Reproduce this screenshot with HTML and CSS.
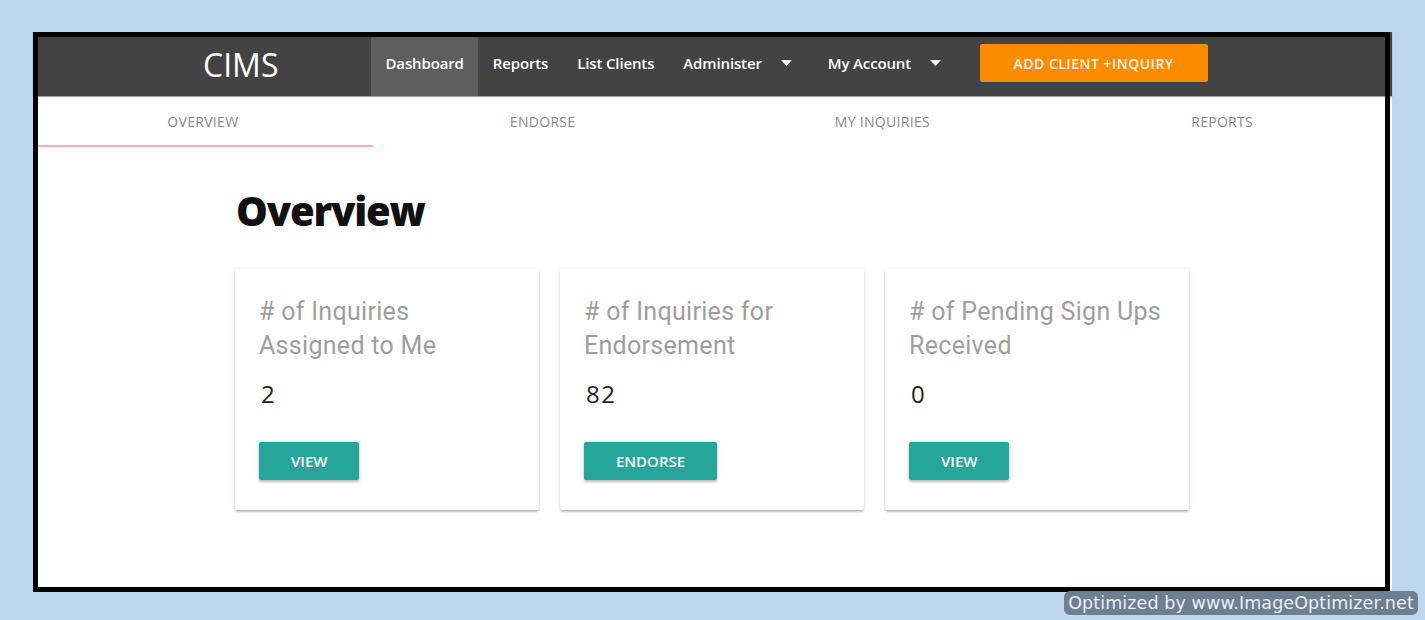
FILE: index.html
```html
<!DOCTYPE html>
<html lang="en">
<head>
<meta charset="utf-8">
<title>CIMS - Overview</title>
<link rel="stylesheet" href="styles.css">
</head>
<body>
<div class="screen">
  <nav class="navbar">
    <div class="brand">CIMS</div>
    <ul class="nav-links">
      <li class="nav-item active">Dashboard</li>
      <li class="nav-item">Reports</li>
      <li class="nav-item">List Clients</li>
      <li class="nav-item dropdown">Administer<svg class="caret" width="11" height="6" viewBox="0 0 11 6"><path d="M0 0h11L5.5 6z" fill="#fff"/></svg></li>
      <li class="nav-item dropdown">My Account<svg class="caret" width="11" height="6" viewBox="0 0 11 6"><path d="M0 0h11L5.5 6z" fill="#fff"/></svg></li>
    </ul>
    <div class="add-btn">ADD CLIENT +INQUIRY</div>
  </nav>
  <div class="tabs">
    <div class="tab active">OVERVIEW</div>
    <div class="tab">ENDORSE</div>
    <div class="tab">MY INQUIRIES</div>
    <div class="tab">REPORTS</div>
  </div>
  <main class="container">
    <h1 class="title">Overview</h1>
    <div class="cards">
      <div class="card">
        <div class="card-title"># of Inquiries<br>Assigned to Me</div>
        <div class="card-num">2</div>
        <div class="btn">VIEW</div>
      </div>
      <div class="card">
        <div class="card-title"># of Inquiries for<br>Endorsement</div>
        <div class="card-num">82</div>
        <div class="btn">ENDORSE</div>
      </div>
      <div class="card">
        <div class="card-title"># of Pending Sign Ups<br>Received</div>
        <div class="card-num">0</div>
        <div class="btn">VIEW</div>
      </div>
    </div>
  </main>
</div>
<div class="watermark">Optimized by www.ImageOptimizer.net</div>
</body>
</html>
```
FILE: styles.css
```css
*, *::before, *::after { box-sizing: border-box; }
html, body { margin: 0; padding: 0; }
body {
  background: #bdd7ee;
  width: 1425px;
  height: 620px;
  padding: 32px 0 0 33px;
  overflow: hidden;
  position: relative;
  font-family: "Open Sans", "Liberation Sans", sans-serif;
}
.screen {
  position: relative;
  width: 1359px;
  height: 560px;
  background: #fff;
}
.screen::after {
  content: "";
  position: absolute;
  left: 0;
  top: 0;
  width: 1357px;
  height: 560px;
  border: 5px solid #000;
  pointer-events: none;
}
.navbar {
  display: flex;
  align-items: center;
  height: 64px;
  background: #434343;
  box-shadow: 0 1px 1px rgba(0,0,0,0.35);
  color: #fff;
}
.brand {
  width: 338px;
  padding-left: 170px;
  font-size: 32px;
  font-weight: 400;
}
.nav-links {
  display: flex;
  list-style: none;
  margin: 0;
  padding: 0;
  height: 64px;
}
.nav-item {
  display: flex;
  align-items: center;
  height: 64px;
  padding: 0 14.5px 2px;
  font-size: 15px;
  font-weight: 600;
  letter-spacing: -0.14px;
}
.nav-item.active { background: #5e5e5e; }
.caret { margin-left: 19px; margin-right: 7px; }
.add-btn {
  margin-left: 17px;
  margin-bottom: 2px;
  width: 228px;
  height: 38px;
  background: #fb8c00;
  border-radius: 2px;
  display: flex;
  align-items: center;
  justify-content: center;
  font-size: 14px;
  font-weight: 600;
  letter-spacing: 0.5px;
  color: #fff5e6;
}
.tabs {
  display: grid;
  grid-template-columns: repeat(4, 1fr);
  height: 51px;
}
.tab {
  display: flex;
  align-items: center;
  justify-content: center;
  font-size: 14px;
  color: #8a8a8a;
  letter-spacing: 0.3px;
  border-bottom: 2px solid transparent;
  padding-top: 2px;
}
.tab.active { border-bottom-color: #f6b2b5; }
.container {
  width: 955px;
  margin: 0 auto;
}
.title {
  margin: 40px 0 34px 1px;
  font-size: 40px;
  line-height: 48px;
  font-weight: 800;
  color: #111;
  letter-spacing: -1.2px;
}
.cards {
  display: grid;
  grid-template-columns: repeat(3, 304px);
  gap: 21px;
}
.card {
  background: #fff;
  padding: 26px 24px 30px;
  box-shadow: 0 2px 2px 0 rgba(0,0,0,0.14), 0 3px 1px -2px rgba(0,0,0,0.12), 0 1px 5px 0 rgba(0,0,0,0.12);
  border-radius: 2px;
}
.card-title {
  font-family: Roboto, "Open Sans", sans-serif;
  font-size: 25px;
  line-height: 33.6px;
  letter-spacing: 0.3px;
  color: #9e9e9e;
}
.card-num {
  margin-top: 14px;
  margin-left: 2px;
  font-size: 24px;
  line-height: 36px;
  color: #222;
  letter-spacing: 1.5px;
}
.btn {
  display: inline-flex;
  align-items: center;
  margin-top: 30px;
  height: 38px;
  padding: 0 32px;
  background: #26a69a;
  color: #fff;
  font-size: 15px;
  font-weight: 600;
  border-radius: 2px;
  box-shadow: 0 2px 2px 0 rgba(0,0,0,0.14), 0 1px 4px 0 rgba(0,0,0,0.2);
}
.watermark {
  position: absolute;
  left: 1064px;
  top: 591px;
  width: 354px;
  height: 24px;
  background: #6e7f90;
  border-radius: 6px;
  color: #e8eef4;
  font-family: "DejaVu Sans", Verdana, sans-serif;
  font-size: 17.5px;
  line-height: 24px;
  text-align: center;
  white-space: nowrap;
  letter-spacing: 0.1px;
}
```
